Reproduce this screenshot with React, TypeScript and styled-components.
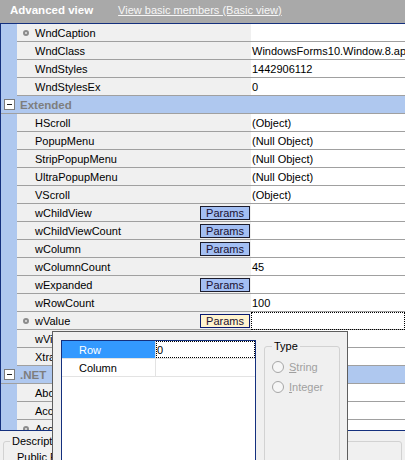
import React from 'react';
import styled, { createGlobalStyle } from 'styled-components';

const GlobalStyle = createGlobalStyle`
  html, body {
    margin: 0;
    padding: 0;
  }
  body {
    font-family: "Liberation Sans", Arial, sans-serif;
    font-size: 11px;
    background: #f0f0f0;
    color: #000;
    overflow: hidden;
  }
`;

const Page = styled.div`
  position: relative;
  width: 405px;
  height: 460px;
  overflow: hidden;
`;

const Header = styled.div`
  height: 23px;
  box-sizing: border-box;
  padding: 0 0 3px 10px;
  background: #a9a9a9;
  display: flex;
  align-items: center;
`;

const HeaderTitle = styled.span`
  font-weight: bold;
  font-size: 11.5px;
  color: #fff;
`;

const HeaderLink = styled.a`
  margin-left: 25px;
  color: #f6f6f6;
  text-decoration: underline;
  cursor: pointer;
`;

const Grid = styled.div`
  height: 406px;
  border: 1px solid #14307e;
  border-right: none;
  background: #fff;
  overflow: hidden;
`;

const PropRow = styled.div`
  display: grid;
  grid-template-columns: 16px 234px 1fr;
  height: 18px;
`;

const Margin = styled.div`
  background: #afc8ef;
`;

const NameCell = styled.div`
  display: flex;
  align-items: center;
  box-sizing: border-box;
  padding-left: 6px;
  background: #f0f0f0;
  border-bottom: 1px solid #a0a0a0;
  white-space: nowrap;
`;

const Bullet = styled.span<{ $show: boolean }>`
  width: 6px;
  height: 6px;
  margin-right: 6px;
  box-sizing: border-box;
  border-radius: 50%;
  border: 2px solid #8c8c8c;
  background: #e6e6e6;
  visibility: ${(p) => (p.$show ? 'visible' : 'hidden')};
  flex-shrink: 0;
`;

const ParamsButton = styled.span<{ $active?: boolean }>`
  margin-left: auto;
  margin-right: 1px;
  width: 50px;
  height: 14px;
  box-sizing: border-box;
  display: flex;
  align-items: center;
  justify-content: center;
  border: 1px solid ${(p) => (p.$active ? '#0a1a70' : '#1c1c2c')};
  background: ${(p) => (p.$active ? '#fff3cf' : '#a3bff3')};
  color: #1a1030;
  font-size: 11px;
`;

const ValueCell = styled.div<{ $focus?: boolean }>`
  display: flex;
  align-items: center;
  box-sizing: border-box;
  padding-left: 1px;
  background: #fff;
  border-bottom: 1px solid #a0a0a0;
  white-space: nowrap;
  overflow: hidden;
  outline: ${(p) => (p.$focus ? '1px dotted #000' : 'none')};
  outline-offset: -1px;
`;

const CatRow = styled.div`
  display: flex;
  align-items: center;
  height: 18px;
  box-sizing: border-box;
  padding-left: 3px;
  background: #afc8ef;
  border-bottom: 1px solid #a0a0a0;
`;

const Toggle = styled.span`
  position: relative;
  width: 11px;
  height: 11px;
  box-sizing: border-box;
  border: 1px solid #7c7c7c;
  background: #fff;
  display: flex;
  align-items: center;
  justify-content: center;
  &::after {
    content: '';
    width: 5px;
    height: 1px;
    background: #222;
  }
`;

const CatLabel = styled.span`
  margin-left: 5px;
  font-weight: bold;
  font-size: 11.5px;
  color: #7e7e7e;
`;

const Description = styled.div`
  height: 29px;
  box-sizing: border-box;
  padding: 4px 3px 0;
  overflow: hidden;
  background: #f0f0f0;
`;

const GroupBox = styled.fieldset`
  margin: 0;
  min-width: 0;
  box-sizing: border-box;
  border: 1px solid #d2d2d2;
  border-radius: 3px;
`;

const DescBox = styled(GroupBox)`
  height: 80px;
  padding: 0 0 0 6px;
`;

const Legend = styled.legend`
  padding: 0 2px;
  line-height: 13px;
  color: #000;
`;

const DescText = styled.div`
  margin-top: 3px;
  padding-left: 7px;
  line-height: 13px;
`;

const Popup = styled.div`
  position: absolute;
  left: 52px;
  top: 331px;
  width: 296px;
  height: 200px;
  box-sizing: border-box;
  padding: 8px 7px 0 8px;
  display: flex;
  align-items: flex-start;
  gap: 8px;
  border: 1px solid #5e5e5e;
  background: #f0f0f0;
`;

const ParamGrid = styled.div`
  width: 195px;
  height: 190px;
  box-sizing: border-box;
  border: 1px solid #14307e;
  background: #fff;
`;

const ParamRow = styled.div`
  display: grid;
  grid-template-columns: 94px 1fr;
  height: 18px;
  box-sizing: border-box;
  border-bottom: 1px solid #e3e3e3;
`;

const ParamName = styled.div<{ $selected?: boolean }>`
  display: flex;
  align-items: center;
  padding-left: 17px;
  border-right: 1px solid #e3e3e3;
  background: ${(p) => (p.$selected ? '#3399ff' : '#fff')};
  color: ${(p) => (p.$selected ? '#fff' : '#000')};
`;

const ParamValue = styled.div<{ $focus?: boolean }>`
  display: flex;
  align-items: center;
  box-sizing: border-box;
  padding-left: 1px;
  outline: ${(p) => (p.$focus ? '1px dotted #000' : 'none')};
  outline-offset: -1px;
`;

const TypeBox = styled(GroupBox)`
  width: 76px;
  height: 190px;
  padding: 4px 4px 0 7px;
`;

const RadioRow = styled.label`
  display: flex;
  align-items: center;
  height: 20px;
  color: #a0a0a0;
`;

const RadioCircle = styled.span`
  width: 12px;
  height: 12px;
  margin-right: 5px;
  box-sizing: border-box;
  border-radius: 50%;
  border: 1px solid #a6a6a6;
  background: #f6f6f6;
`;

type Row =
  | { kind: 'cat'; label: string }
  | { kind: 'prop'; name: string; value?: string; bullet?: boolean; params?: boolean; focus?: boolean };

const rows: Row[] = [
  { kind: 'prop', name: 'WndCaption', bullet: true },
  { kind: 'prop', name: 'WndClass', value: 'WindowsForms10.Window.8.app.0.2bf8098_r11_ad1' },
  { kind: 'prop', name: 'WndStyles', value: '1442906112' },
  { kind: 'prop', name: 'WndStylesEx', value: '0' },
  { kind: 'cat', label: 'Extended' },
  { kind: 'prop', name: 'HScroll', value: '(Object)' },
  { kind: 'prop', name: 'PopupMenu', value: '(Null Object)' },
  { kind: 'prop', name: 'StripPopupMenu', value: '(Null Object)' },
  { kind: 'prop', name: 'UltraPopupMenu', value: '(Null Object)' },
  { kind: 'prop', name: 'VScroll', value: '(Object)' },
  { kind: 'prop', name: 'wChildView', params: true },
  { kind: 'prop', name: 'wChildViewCount', params: true },
  { kind: 'prop', name: 'wColumn', params: true },
  { kind: 'prop', name: 'wColumnCount', value: '45' },
  { kind: 'prop', name: 'wExpanded', params: true },
  { kind: 'prop', name: 'wRowCount', value: '100' },
  { kind: 'prop', name: 'wValue', bullet: true, params: true, focus: true },
  { kind: 'prop', name: 'wViewStyle' },
  { kind: 'prop', name: 'XtraGridView' },
  { kind: 'cat', label: '.NET' },
  { kind: 'prop', name: 'AboutBox' },
  { kind: 'prop', name: 'AccessibilityObject' },
  { kind: 'prop', name: 'AccessibleName', bullet: true },
];

function App() {
  return (
    <Page>
      <GlobalStyle />
      <Header>
        <HeaderTitle>Advanced view</HeaderTitle>
        <HeaderLink>View basic members (Basic view)</HeaderLink>
      </Header>
      <Grid>
        {rows.map((row, i) =>
          row.kind === 'cat' ? (
            <CatRow key={i}>
              <Toggle />
              <CatLabel>{row.label}</CatLabel>
            </CatRow>
          ) : (
            <PropRow key={i}>
              <Margin />
              <NameCell>
                <Bullet $show={!!row.bullet} />
                {row.name}
                {row.params ? <ParamsButton $active={row.focus}>Params</ParamsButton> : null}
              </NameCell>
              <ValueCell $focus={row.focus}>{row.value}</ValueCell>
            </PropRow>
          )
        )}
      </Grid>
      <Description>
        <DescBox>
          <Legend>Description</Legend>
          <DescText>Public Property</DescText>
        </DescBox>
      </Description>
      <Popup>
        <ParamGrid>
          <ParamRow>
            <ParamName $selected>Row</ParamName>
            <ParamValue $focus>0</ParamValue>
          </ParamRow>
          <ParamRow>
            <ParamName>Column</ParamName>
            <ParamValue />
          </ParamRow>
        </ParamGrid>
        <TypeBox>
          <Legend>Type</Legend>
          <RadioRow>
            <RadioCircle />
            <span>
              <u>S</u>tring
            </span>
          </RadioRow>
          <RadioRow>
            <RadioCircle />
            <span>
              <u>I</u>nteger
            </span>
          </RadioRow>
        </TypeBox>
      </Popup>
    </Page>
  );
}

export default App;
